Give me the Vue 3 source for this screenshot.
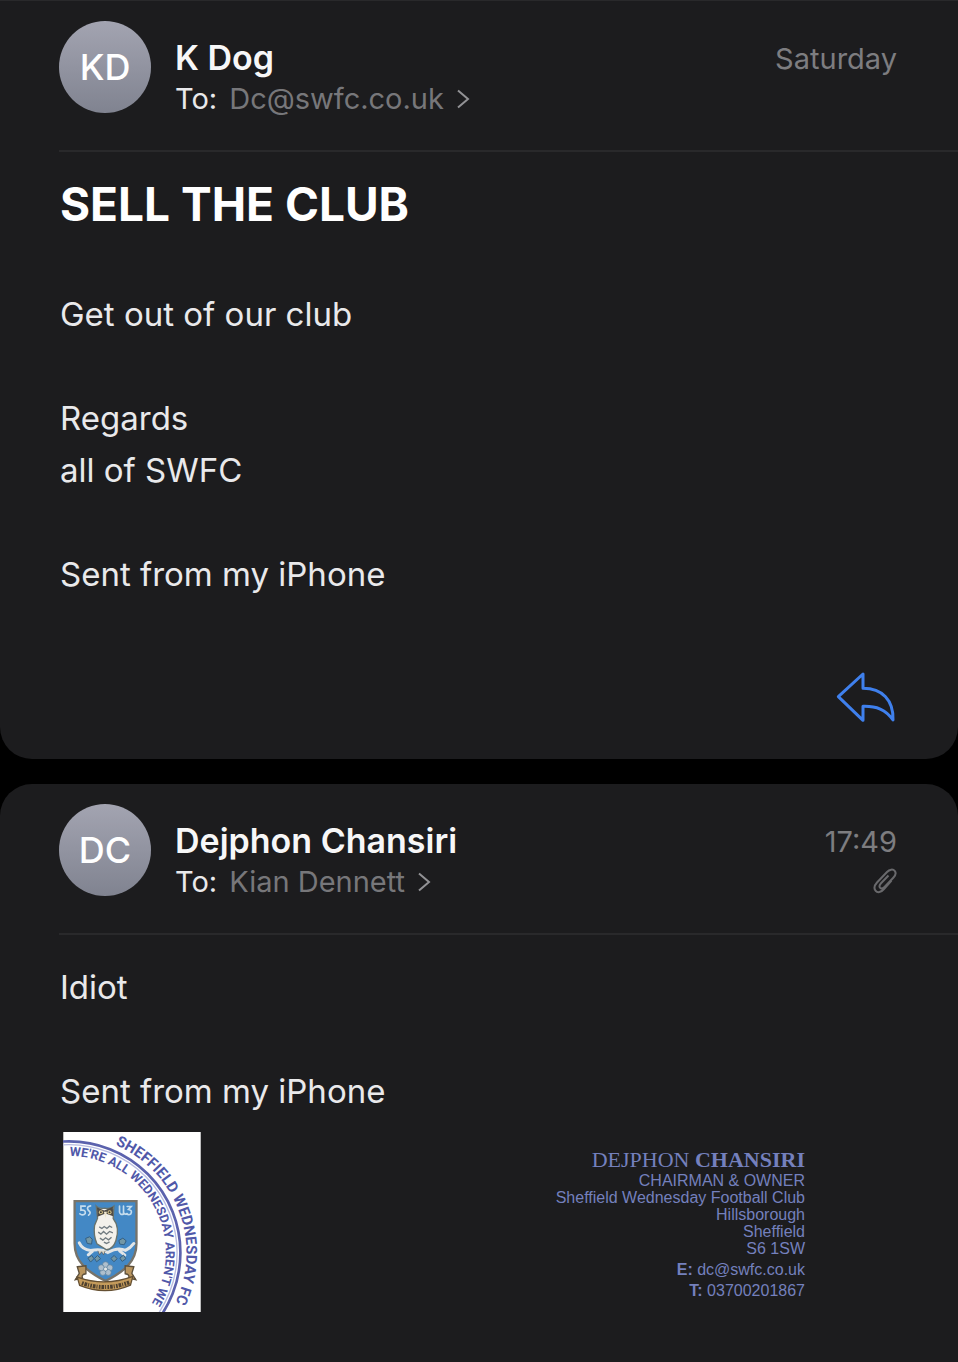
<script setup>
import { ref } from "vue";

const messages = ref([
  {
    id: 1,
    initials: "KD",
    sender: "K Dog",
    recipient: "Dc@swfc.co.uk",
    time: "Saturday",
    subject: "SELL THE CLUB",
    body: "Get out of our club\n\nRegards\nall of SWFC\n\nSent from my iPhone",
    canReply: true,
  },
  {
    id: 2,
    initials: "DC",
    sender: "Dejphon Chansiri",
    recipient: "Kian Dennett",
    time: "17:49",
    body: "Idiot\n\nSent from my iPhone",
    hasAttachment: true,
    signature: {
      firstName: "DEJPHON",
      lastName: "CHANSIRI",
      lines: [
        "CHAIRMAN & OWNER",
        "Sheffield Wednesday Football Club",
        "Hillsborough",
        "Sheffield",
        "S6 1SW",
      ],
      email: "dc@swfc.co.uk",
      phone: "03700201867",
    },
  },
]);
</script>

<template>
  <main class="thread">
    <article v-for="message in messages" :key="message.id" class="message">
      <header class="message-header">
        <div class="avatar">{{ message.initials }}</div>

        <div class="people">
          <div class="sender">{{ message.sender }}</div>
          <div class="to">
            <span>To:</span>
            <button type="button" class="recipient">
              {{ message.recipient }}
              <svg class="chevron" viewBox="0 0 14 22" aria-hidden="true">
                <path d="M2 2.5 L12 11 L2 19.5" />
              </svg>
            </button>
          </div>
        </div>

        <div class="meta">
          <time>{{ message.time }}</time>
          <svg v-if="message.hasAttachment" class="clip" viewBox="0 0 24 26" aria-hidden="true">
            <path
              d="M18.5 12.5 L11 21 C8 24.5 4.5 25 2.7 22.8 C0.7 20.5 1.3 17.5 4 14.5 L14 4 C16.5 1.3 20 0.8 21.7 2.8 C23.3 4.8 22.5 7.5 20.3 9.8 L11.5 19 C9.8 20.8 8 20.8 7 19.6 C6 18.3 6.5 16.8 8 15.2 L15.5 7.5"
            />
          </svg>
        </div>
      </header>

      <div class="content">
        <h1 v-if="message.subject" class="subject">{{ message.subject }}</h1>
        <p class="body">{{ message.body }}</p>

        <!-- Email signature -->
        <div v-if="message.signature" class="signature">
          <svg class="crest" viewBox="38 35 413 541" role="img" aria-label="Club crest">
            <defs>
              <path id="outer-ring" d="M55 45 A353 353 0 0 1 55 751" />
              <path id="inner-ring" d="M55 107 A291 291 0 0 1 55 689" />
            </defs>
            <rect x="38" y="35" width="413" height="541" fill="#fff" />

            <circle cx="55" cy="398" r="335" fill="none" stroke="#5b62ad" stroke-width="8" />
            <circle cx="55" cy="398" r="325" fill="none" stroke="#b9bce0" stroke-width="4" />
            <text class="ring-text" font-size="45">
              <textPath href="#outer-ring" startOffset="143">SHEFFIELD WEDNESDAY FC</textPath>
            </text>
            <text class="ring-text" font-size="38">
              <textPath href="#inner-ring" startOffset="2">WE'RE ALL WEDNESDAY AREN'T WE</textPath>
            </text>

            <!-- Shield -->
            <path
              d="M72 243 H258 V370 C258 425 220 455 165 483 C110 455 72 425 72 370 Z"
              fill="#4388c5"
              stroke="#77736a"
              stroke-width="7"
            />
            <g fill="none" stroke="#c5dced" stroke-width="5" stroke-linecap="round">
              <path d="M104 258 H91 V270 Q106 268 104 280 Q98 288 88 281 M120 257 Q106 260 113 270 Q124 277 114 285" />
              <path d="M207 258 V276 Q209 285 219 282 V258 M219 276 Q222 285 230 280 M230 259 H242 L234 268 Q247 270 241 281 Q235 286 228 281" />
            </g>

            <!-- Branch and leaves -->
            <path
              d="M86 368 Q95 388 120 391 Q153 384 172 397 Q202 380 225 391 Q240 384 250 370 M127 392 L113 404 M207 392 L223 405"
              fill="none"
              stroke="#e1e5e7"
              stroke-width="9"
              stroke-linecap="round"
            />
            <g fill="#7397a5" stroke="#345f83" stroke-width="3">
              <path d="M105 355 l12 -5 8 7 -2 15 -13 -2z M205 361 l12 -7 10 8 -6 12 -13 -2z" />
              <path d="M112 414 l12 -8 6 10 -10 10z M132 415 l9 -9 9 10 -12 9z M181 415 l10 -9 9 10 -10 9z M208 414 l11 -9 7 11 -11 8z" />
            </g>

            <!-- Owl -->
            <path
              d="M137 258 Q144 267 163 264 Q181 267 190 258 L188 295 Q209 322 196 362 Q188 386 168 389 L139 371 Q128 345 132 316 L141 294 Z"
              fill="#f3f1eb"
              stroke="#68736d"
              stroke-width="4"
            />
            <path d="M139 261 L161 271 L187 260 L188 288 L165 280 L141 290 Z" fill="#504c45" />
            <circle cx="151" cy="276" r="6" fill="#d8c588" />
            <circle cx="177" cy="276" r="6" fill="#d8c588" />
            <circle cx="151" cy="276" r="3" fill="#333" />
            <circle cx="177" cy="276" r="3" fill="#333" />
            <path d="M160 275 L169 275 L165 295 Z" fill="#eee6cc" />
            <path
              d="M146 320 l8 5 7 -6 8 6 8 -7 8 4 M143 336 l8 6 8 -8 9 8 9 -8 10 4 M148 354 l9 6 8 -7 9 6 9 -8 M160 366 l8 4 9 -5"
              fill="none"
              stroke="#717b80"
              stroke-width="4"
            />
            <path d="M142 392 l5 12 6 -9 6 9 5 -12" fill="#d8d5c7" stroke="#555" stroke-width="2" />

            <!-- Rose -->
            <g fill="#aebfcd" stroke="#5b7e9c" stroke-width="2">
              <circle cx="165" cy="434" r="9" />
              <circle cx="178" cy="443" r="9" />
              <circle cx="173" cy="457" r="9" />
              <circle cx="157" cy="457" r="9" />
              <circle cx="152" cy="443" r="9" />
              <circle cx="165" cy="447" r="6" fill="#e5e9e9" />
            </g>

            <!-- Motto scroll -->
            <path
              d="M80 440 L106 437 L106 461 Q91 463 96 474 L74 479 L86 460 Z M250 440 L224 437 L224 461 Q239 463 234 474 L256 479 L244 460 Z"
              fill="#b9955f"
              stroke="#5d503c"
              stroke-width="4"
            />
            <path
              d="M80 471 Q164 501 247 469 L240 495 Q165 528 87 496 Z"
              fill="#c49b5b"
              stroke="#655033"
              stroke-width="4"
            />
            <path d="M94 489 Q165 514 236 487" fill="none" stroke="#4d402f" stroke-width="12" stroke-dasharray="5 3 8 3 3 4" />
          </svg>

          <address class="card">
            <div class="card-name">
              {{ message.signature.firstName }} <b>{{ message.signature.lastName }}</b>
            </div>
            <div v-for="line in message.signature.lines" :key="line">{{ line }}</div>
            <div class="contacts">
              <div><b>E:</b> <a :href="`mailto:${message.signature.email}`">{{ message.signature.email }}</a></div>
              <div><b>T:</b> <a :href="`tel:${message.signature.phone}`">{{ message.signature.phone }}</a></div>
            </div>
          </address>
        </div>
      </div>

      <footer v-if="message.canReply" class="actions">
        <button type="button" class="reply" aria-label="Reply">
          <svg viewBox="46 32 186 156" aria-hidden="true">
            <path d="M56 109 L130 41 V84 C188 84 222 120 220 179 C198 147 170 137 130 138 V180 Z" />
          </svg>
        </button>
      </footer>
    </article>
  </main>
</template>

<style>
body {
  margin: 0;
  background: #000;
}
</style>

<style scoped>
* {
  box-sizing: border-box;
}

.thread {
  display: flex;
  flex-direction: column;
  gap: 25px;
  min-height: 100vh;
  background: #000;
  color: #e9e9eb;
  font-family: Inter, "Liberation Sans", sans-serif;
}

.message {
  background: #1c1c1e;
  border-radius: 32px;
}

.message:first-child {
  border-top: 1px solid #29292b;
  border-top-left-radius: 0;
  border-top-right-radius: 0;
}

.message:last-child {
  flex: 1;
  border-bottom-left-radius: 0;
  border-bottom-right-radius: 0;
}

.message-header {
  display: flex;
  align-items: flex-start;
  margin-left: 59px;
  padding: 20px 61px 31px 0;
  border-bottom: 2px solid #29292b;
}

.avatar {
  display: flex;
  flex-shrink: 0;
  align-items: center;
  justify-content: center;
  width: 92px;
  height: 92px;
  border-radius: 50%;
  background: linear-gradient(#a3a4b1, #808390);
  color: #fff;
  font-size: 36px;
  font-weight: 500;
}

.people {
  flex: 1;
  min-width: 0;
  padding-top: 16px;
  padding-left: 24px;
  line-height: 41px;
}

.sender {
  color: #f7f7f8;
  font-size: 34px;
  font-weight: 600;
}

.to {
  display: flex;
  gap: 12px;
  font-size: 29px;
}

.recipient {
  display: flex;
  align-items: center;
  gap: 12px;
  padding: 0;
  border: none;
  background: none;
  color: #77777a;
  font: inherit;
  cursor: pointer;
}

.chevron {
  width: 14px;
  height: 22px;
  fill: none;
  stroke: #929295;
  stroke-width: 2;
}

.meta {
  display: flex;
  flex-direction: column;
  align-items: flex-end;
  gap: 4px;
  height: 92px;
  padding-top: 16px;
  color: #7d7d80;
  font-size: 29px;
  line-height: 44px;
}

.clip {
  width: 24px;
  height: 26px;
  fill: none;
  stroke: #69696c;
  stroke-width: 2;
}

.content {
  padding: 26px 60px 0;
}

.subject {
  margin: 0 0 58px;
  color: #fff;
  font-size: 46px;
  font-weight: 700;
  line-height: 52px;
}

.body {
  margin: 0;
  font-size: 33px;
  line-height: 52px;
  white-space: pre-line;
}

.signature {
  display: flex;
  align-items: flex-start;
  justify-content: space-between;
  margin-top: 15px;
  padding: 0 93px 48px 3px;
}

.crest {
  width: 138px;
  height: 180px;
}

.ring-text {
  fill: #5058a9;
  font-family: Roboto, "Liberation Sans", sans-serif;
  font-weight: 700;
}

.card {
  padding-top: 16px;
  color: #7480bd;
  font-family: "Liberation Sans", Arial, sans-serif;
  font-size: 16px;
  font-style: normal;
  line-height: 17px;
  text-align: right;
}

.card-name {
  font-family: "Liberation Serif", "Times New Roman", serif;
  font-size: 22px;
  line-height: 24px;
}

.contacts {
  margin-top: 2px;
  line-height: 21px;
}

.contacts a {
  color: inherit;
  text-decoration: none;
}

.actions {
  display: flex;
  justify-content: flex-end;
  padding: 71px 61px 36px;
}

.reply {
  width: 62px;
  height: 52px;
  padding: 0;
  border: none;
  background: none;
  cursor: pointer;
}

.reply svg {
  display: block;
  width: 62px;
  height: 52px;
  fill: none;
  stroke: #3f80ed;
  stroke-width: 9;
  stroke-linejoin: round;
}
</style>
